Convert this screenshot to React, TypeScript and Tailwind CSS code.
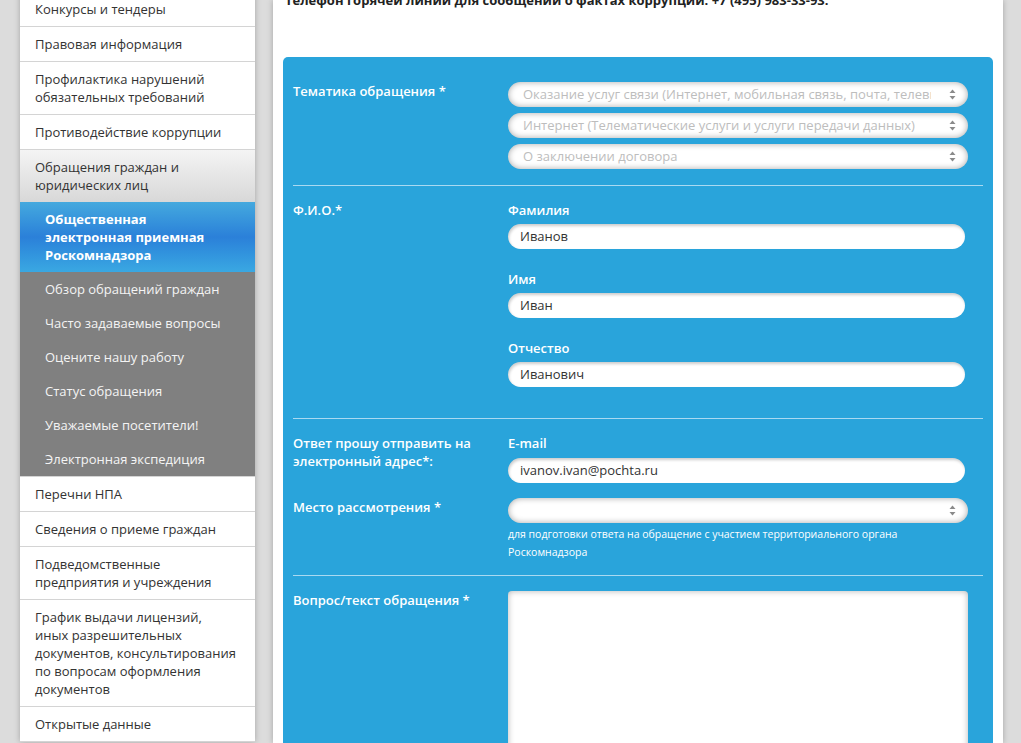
import React from 'react';

const topItems = [
  'Конкурсы и тендеры',
  'Правовая информация',
  'Профилактика нарушений\nобязательных требований',
  'Противодействие коррупции',
];

const subItems = [
  'Обзор обращений граждан',
  'Часто задаваемые вопросы',
  'Оцените нашу работу',
  'Статус обращения',
  'Уважаемые посетители!',
  'Электронная экспедиция',
];

const bottomItems = [
  'Перечни НПА',
  'Сведения о приеме граждан',
  'Подведомственные\nпредприятия и учреждения',
  'График выдачи лицензий,\nиных разрешительных\nдокументов, консультирования\nпо вопросам оформления\nдокументов',
  'Открытые данные',
];

const SelectArrows = () => (
  <svg width="7" height="11" viewBox="0 0 7 11" className="shrink-0">
    <path d="M3.5 0.5 L6.5 4 L0.5 4 Z" fill="#8a8a8a" />
    <path d="M3.5 10.5 L6.5 7 L0.5 7 Z" fill="#8a8a8a" />
  </svg>
);

const Select = ({ text }: { text: string }) => (
  <div className="h-[25px] w-[460px] bg-white rounded-full shadow-[inset_0_0_6px_rgba(0,0,0,0.35)] flex items-center pl-[15px] pr-[12px] gap-[18px]">
    <span className="flex-1 overflow-hidden whitespace-nowrap text-[13px] text-[#bdbdbd]">{text}</span>
    <SelectArrows />
  </div>
);

const Input = ({ value }: { value: string }) => (
  <div className="h-[25px] w-[457px] bg-white rounded-full shadow-[inset_1px_2px_3px_rgba(0,0,0,0.2)] flex items-center pl-[12px] text-[13px] text-[#333]">
    {value}
  </div>
);

const SideItem = ({ text }: { text: string }) => (
  <div className="px-[15px] py-[8px] leading-[18px] text-[13px] text-[#333] border-b border-[#d4d4d4] whitespace-pre-line">
    {text}
  </div>
);

export default function App() {
  return (
    <div
      className="h-[743px] overflow-hidden bg-[#dcdcdc] flex"
      style={{ fontFamily: '"Open Sans", "Liberation Sans", sans-serif' }}
    >
      {/* Sidebar */}
      <aside className="ml-[20px] w-[235px] shrink-0 bg-white -mt-[8px] self-start shadow-[0_0_6px_rgba(0,0,0,0.25)]">
        {topItems.map(t => (
          <SideItem key={t} text={t} />
        ))}
        <div className="px-[15px] py-[8px] leading-[18px] text-[13px] text-[#333] bg-gradient-to-b from-[#f4f4f4] to-[#d8d8d8]">
          Обращения граждан и
          <br />
          юридических лиц
        </div>
        <div className="border-b border-[#d4d4d4]">
          <div className="pl-[25px] pr-[15px] py-[8px] leading-[18px] text-[13px] font-bold text-white bg-gradient-to-b from-[#45a9de] via-[#2b80d9] to-[#3aa8e2]">
            Общественная
            <br />
            электронная приемная
            <br />
            Роскомнадзора
          </div>
          <div className="bg-[#808080]">
            {subItems.map(t => (
              <div key={t} className="pl-[25px] pr-[15px] py-[8px] leading-[18px] text-[13px] text-[#f4f4f4]">
                {t}
              </div>
            ))}
          </div>
        </div>
        {bottomItems.map(t => (
          <SideItem key={t} text={t} />
        ))}
      </aside>

      {/* Main */}
      <main className="ml-[18px] w-[730px] shrink-0 bg-white px-[10px] shadow-[0_0_6px_rgba(0,0,0,0.25)]">
        <p className="-mt-[9px] pl-[2px] leading-[18px] text-[13px] font-bold text-[#222]">
          Телефон горячей линии для сообщений о фактах коррупции: +7 (495) 983-33-93.
        </p>

        <div className="mt-[48px] bg-[#29a4db] rounded-t-[5px] px-[10px] pt-[10px] h-[700px]">
          {/* Тематика */}
          <div className="flex border-b border-[#a9d9f1] pt-[15px] pb-[16px]">
            <div className="w-[215px] shrink-0 text-[13px] leading-[18px] font-semibold text-white">Тематика обращения *</div>
            <div className="flex flex-col gap-[6px]">
              <Select text="Оказание услуг связи (Интернет, мобильная связь, почта, телевидение)" />
              <Select text="Интернет (Телематические услуги и услуги передачи данных)" />
              <Select text="О заключении договора" />
            </div>
          </div>

          {/* ФИО */}
          <div className="flex border-b border-[#a9d9f1] pt-[15px] pb-[31px]">
            <div className="w-[215px] shrink-0 text-[13px] leading-[18px] font-semibold text-white">Ф.И.О.*</div>
            <div className="flex flex-col">
              <div className="text-[13px] leading-[18px] font-semibold text-white">Фамилия</div>
              <div className="mt-[5px]">
                <Input value="Иванов" />
              </div>
              <div className="mt-[21px] text-[13px] leading-[18px] font-semibold text-white">Имя</div>
              <div className="mt-[5px]">
                <Input value="Иван" />
              </div>
              <div className="mt-[21px] text-[13px] leading-[18px] font-semibold text-white">Отчество</div>
              <div className="mt-[5px]">
                <Input value="Иванович" />
              </div>
            </div>
          </div>

          {/* Email + место */}
          <div className="border-b border-[#a9d9f1] pt-[15px] pb-[14px]">
            <div className="flex">
              <div className="w-[215px] shrink-0 text-[13px] leading-[18px] font-semibold text-white">
                Ответ прошу отправить на
                <br />
                электронный адрес*:
              </div>
              <div className="flex flex-col">
                <div className="text-[13px] leading-[18px] font-semibold text-white">E-mail</div>
                <div className="mt-[6px]">
                  <Input value="ivanov.ivan@pochta.ru" />
                </div>
              </div>
            </div>
            <div className="flex mt-[15px]">
              <div className="w-[215px] shrink-0 text-[13px] leading-[18px] font-semibold text-white">Место рассмотрения *</div>
              <div className="flex flex-col">
                <Select text="" />
                <div className="mt-[2px] w-[410px] text-[10.5px] leading-[18px] text-white">
                  для подготовки ответа на обращение с участием территориального органа Роскомнадзора
                </div>
              </div>
            </div>
          </div>

          {/* Вопрос */}
          <div className="flex pt-[15px]">
            <div className="w-[215px] shrink-0 text-[13px] leading-[18px] font-semibold text-white">Вопрос/текст обращения *</div>
            <div className="w-[460px] h-[200px] bg-white rounded-[4px] shadow-[inset_0_0_6px_rgba(0,0,0,0.3)]" />
          </div>
        </div>
      </main>
    </div>
  );
}
